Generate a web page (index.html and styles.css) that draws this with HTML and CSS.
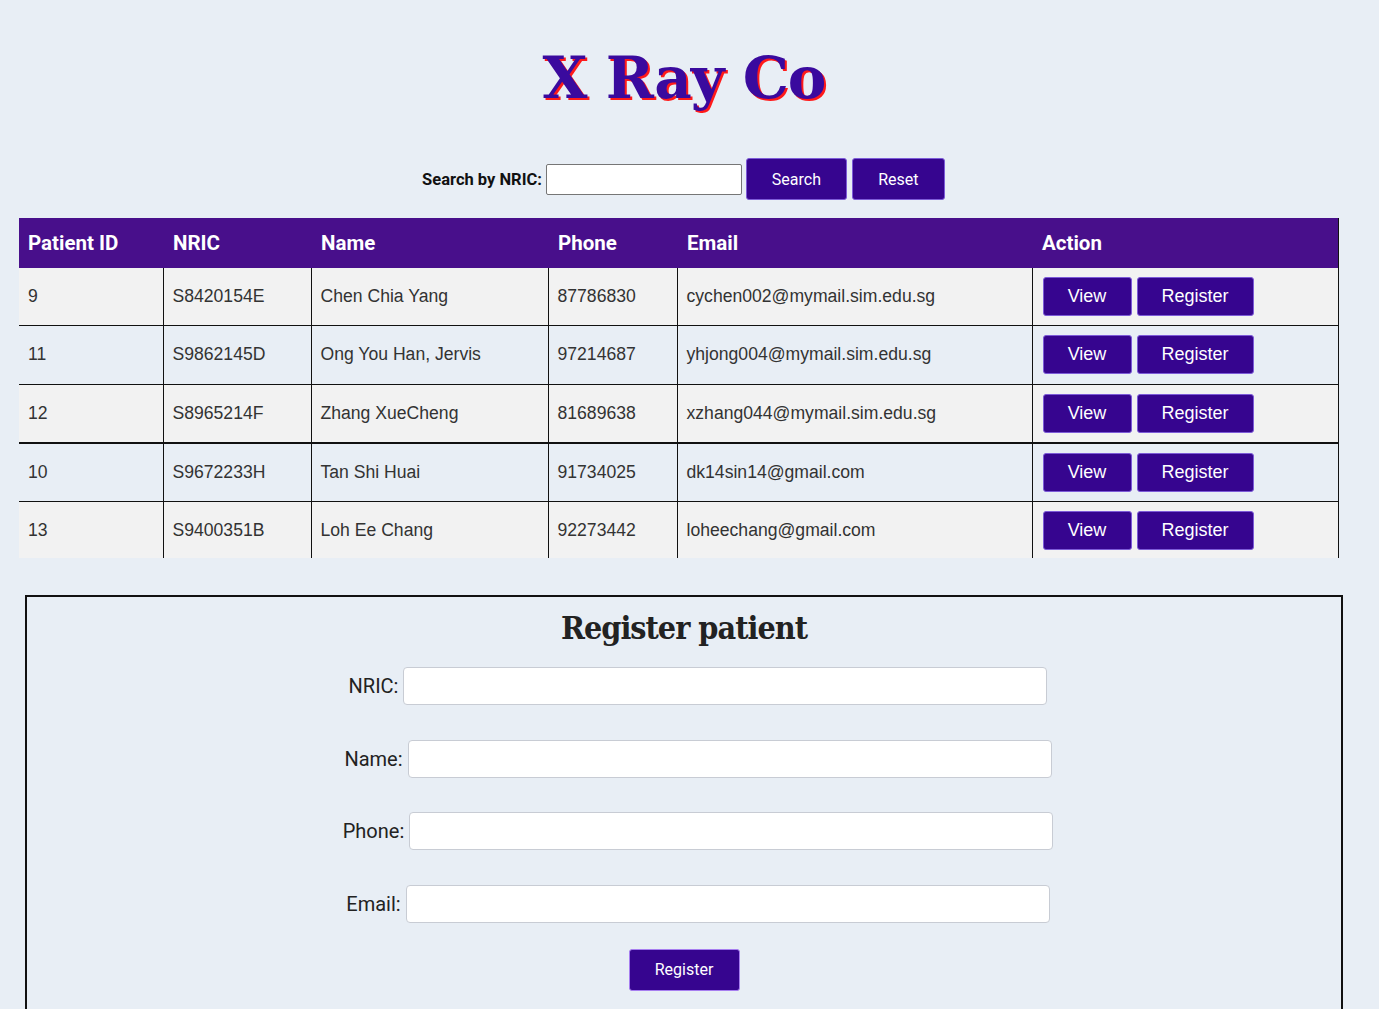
FILE: index.html
```html
<!DOCTYPE html>
<html>
<head>
<meta charset="utf-8">
<title>X Ray Co</title>
<link rel="stylesheet" href="styles.css">
</head>
<body>
<header class="site-header">
  <h1 class="brand">X Ray Co</h1>
</header>

<form class="search-bar">
  <label class="search-label" for="nric-search">Search by NRIC:</label>
  <input class="search-input" id="nric-search" type="text">
  <button class="btn btn-search" type="button">Search</button>
  <button class="btn btn-reset" type="button">Reset</button>
</form>

<div class="table-wrap">
  <table class="patients">
    <colgroup>
      <col class="c-id"><col class="c-nric"><col class="c-name"><col class="c-phone"><col class="c-email"><col class="c-action">
    </colgroup>
    <thead>
      <tr><th>Patient ID</th><th>NRIC</th><th>Name</th><th>Phone</th><th>Email</th><th>Action</th></tr>
    </thead>
    <tbody>
      <tr class="odd"><td>9</td><td>S8420154E</td><td>Chen Chia Yang</td><td>87786830</td><td>cychen002@mymail.sim.edu.sg</td><td class="actions"><button class="btn btn-view">View</button><button class="btn btn-reg">Register</button></td></tr>
      <tr><td>11</td><td>S9862145D</td><td>Ong You Han, Jervis</td><td>97214687</td><td>yhjong004@mymail.sim.edu.sg</td><td class="actions"><button class="btn btn-view">View</button><button class="btn btn-reg">Register</button></td></tr>
      <tr class="odd thick"><td>12</td><td>S8965214F</td><td>Zhang XueCheng</td><td>81689638</td><td>xzhang044@mymail.sim.edu.sg</td><td class="actions"><button class="btn btn-view">View</button><button class="btn btn-reg">Register</button></td></tr>
      <tr><td>10</td><td>S9672233H</td><td>Tan Shi Huai</td><td>91734025</td><td>dk14sin14@gmail.com</td><td class="actions"><button class="btn btn-view">View</button><button class="btn btn-reg">Register</button></td></tr>
      <tr class="odd"><td>13</td><td>S9400351B</td><td>Loh Ee Chang</td><td>92273442</td><td>loheechang@gmail.com</td><td class="actions"><button class="btn btn-view">View</button><button class="btn btn-reg">Register</button></td></tr>
    </tbody>
  </table>
</div>

<section class="register-box">
  <h2 class="register-title">Register patient</h2>
  <form class="register-form">
    <div class="field"><label>NRIC:</label><input type="text"></div>
    <div class="field"><label>Name:</label><input type="text"></div>
    <div class="field"><label>Phone:</label><input type="text"></div>
    <div class="field"><label>Email:</label><input type="text"></div>
    <div class="submit-row"><button class="btn btn-submit" type="button">Register</button></div>
  </form>
</section>
</body>
</html>
```

FILE: styles.css
```css
html, body {
  margin: 0;
  padding: 0;
  background: #e8eef5;
}
body {
  font-family: Roboto, "Liberation Sans", sans-serif;
  color: #222;
  padding-top: 38px;
}

.site-header {
  display: flex;
  justify-content: center;
}
.brand {
  margin: 0 11px 0 0;
  font-family: "DejaVu Serif", serif;
  font-weight: bold;
  font-size: 58px;
  line-height: 80px;
  letter-spacing: -1px;
  color: #3a0a9e;
  text-shadow: 2px 2px 0 #ff1a1a;
}

.search-bar {
  display: flex;
  justify-content: center;
  align-items: center;
  margin-top: 40px;
  padding-right: 12px;
  gap: 4px;
  height: 42px;
}
.search-label {
  font-weight: bold;
  font-size: 16.5px;
  color: #111;
}
.search-input {
  width: 196px;
  height: 31px;
  box-sizing: border-box;
  border: 1px solid #767676;
  border-radius: 2px;
  background: #fff;
}
.btn {
  background: #36058f;
  color: #fff;
  border: 1px solid #7d5bd8;
  border-radius: 3px;
  cursor: pointer;
  font-family: Roboto, "Liberation Sans", sans-serif;
}
.btn-search {
  width: 101px;
  height: 42px;
  font-size: 16px;
}
.btn-reset {
  width: 93px;
  height: 42px;
  font-size: 16px;
  margin-left: 1px;
}

.table-wrap {
  margin: 18px 0 0 19px;
  width: 1320px;
  height: 340px;
  overflow: hidden;
}
.patients {
  width: 1320px;
  border-collapse: collapse;
  table-layout: fixed;
  font-family: "Liberation Sans", Arial, sans-serif;
}
.c-id { width: 144px; }
.c-nric { width: 148px; }
.c-name { width: 237px; }
.c-phone { width: 129px; }
.c-email { width: 355px; }
.c-action { width: 307px; }

.patients th {
  background: #480f8b;
  color: #fff;
  font-family: Roboto, "Liberation Sans", sans-serif;
  font-weight: bold;
  font-size: 20.5px;
  text-align: left;
  height: 50px;
  padding: 0 0 0 9px;
  border-right: 2px solid #480f8b;
}
.patients th:last-child {
  border-right: 2px solid #111;
}
.patients td {
  font-size: 17.6px;
  color: #333;
  height: 57.3px;
  padding: 0 0 0 9px;
  border-right: 1px solid #111;
  border-bottom: 1px solid #111;
}
.patients td:last-child {
  border-right: 2px solid #111;
}
.patients tr.odd td {
  background: #f2f2f2;
}
.patients tr.thick td {
  border-bottom: 2px solid #111;
}
.actions {
  white-space: nowrap;
}
.btn-view {
  width: 89px;
  height: 39px;
  font-family: "Liberation Sans", Arial, sans-serif;
  font-size: 18px;
  margin-left: 1px;
  vertical-align: middle;
}
.btn-reg {
  width: 117px;
  height: 39px;
  font-family: "Liberation Sans", Arial, sans-serif;
  font-size: 18px;
  margin-left: 5px;
  vertical-align: middle;
}

.register-box {
  margin: 37px 0 0 25px;
  width: 1318px;
  box-sizing: border-box;
  border: 2px solid #111;
  padding: 10px 0 20px;
}
.register-title {
  margin: 0;
  text-align: center;
  font-family: "DejaVu Serif", serif;
  font-weight: bold;
  font-stretch: condensed;
  font-size: 32px;
  line-height: 42px;
  letter-spacing: -1px;
  color: #222;
}
.register-form {
  display: flex;
  flex-direction: column;
  align-items: center;
  margin-top: 18px;
}
.field {
  display: flex;
  align-items: center;
  gap: 5px;
  padding-left: 28px;
  margin-bottom: 34.7px;
}
.field label {
  font-size: 20px;
  color: #222;
}
.field input {
  width: 644px;
  height: 38px;
  box-sizing: border-box;
  border: 1px solid #c8ccd4;
  border-radius: 4px;
  background: #fff;
}
.submit-row {
  margin-top: -9px;
}
.btn-submit {
  width: 111px;
  height: 42px;
  font-size: 16px;
  border-color: #a77ef0;
}
```
